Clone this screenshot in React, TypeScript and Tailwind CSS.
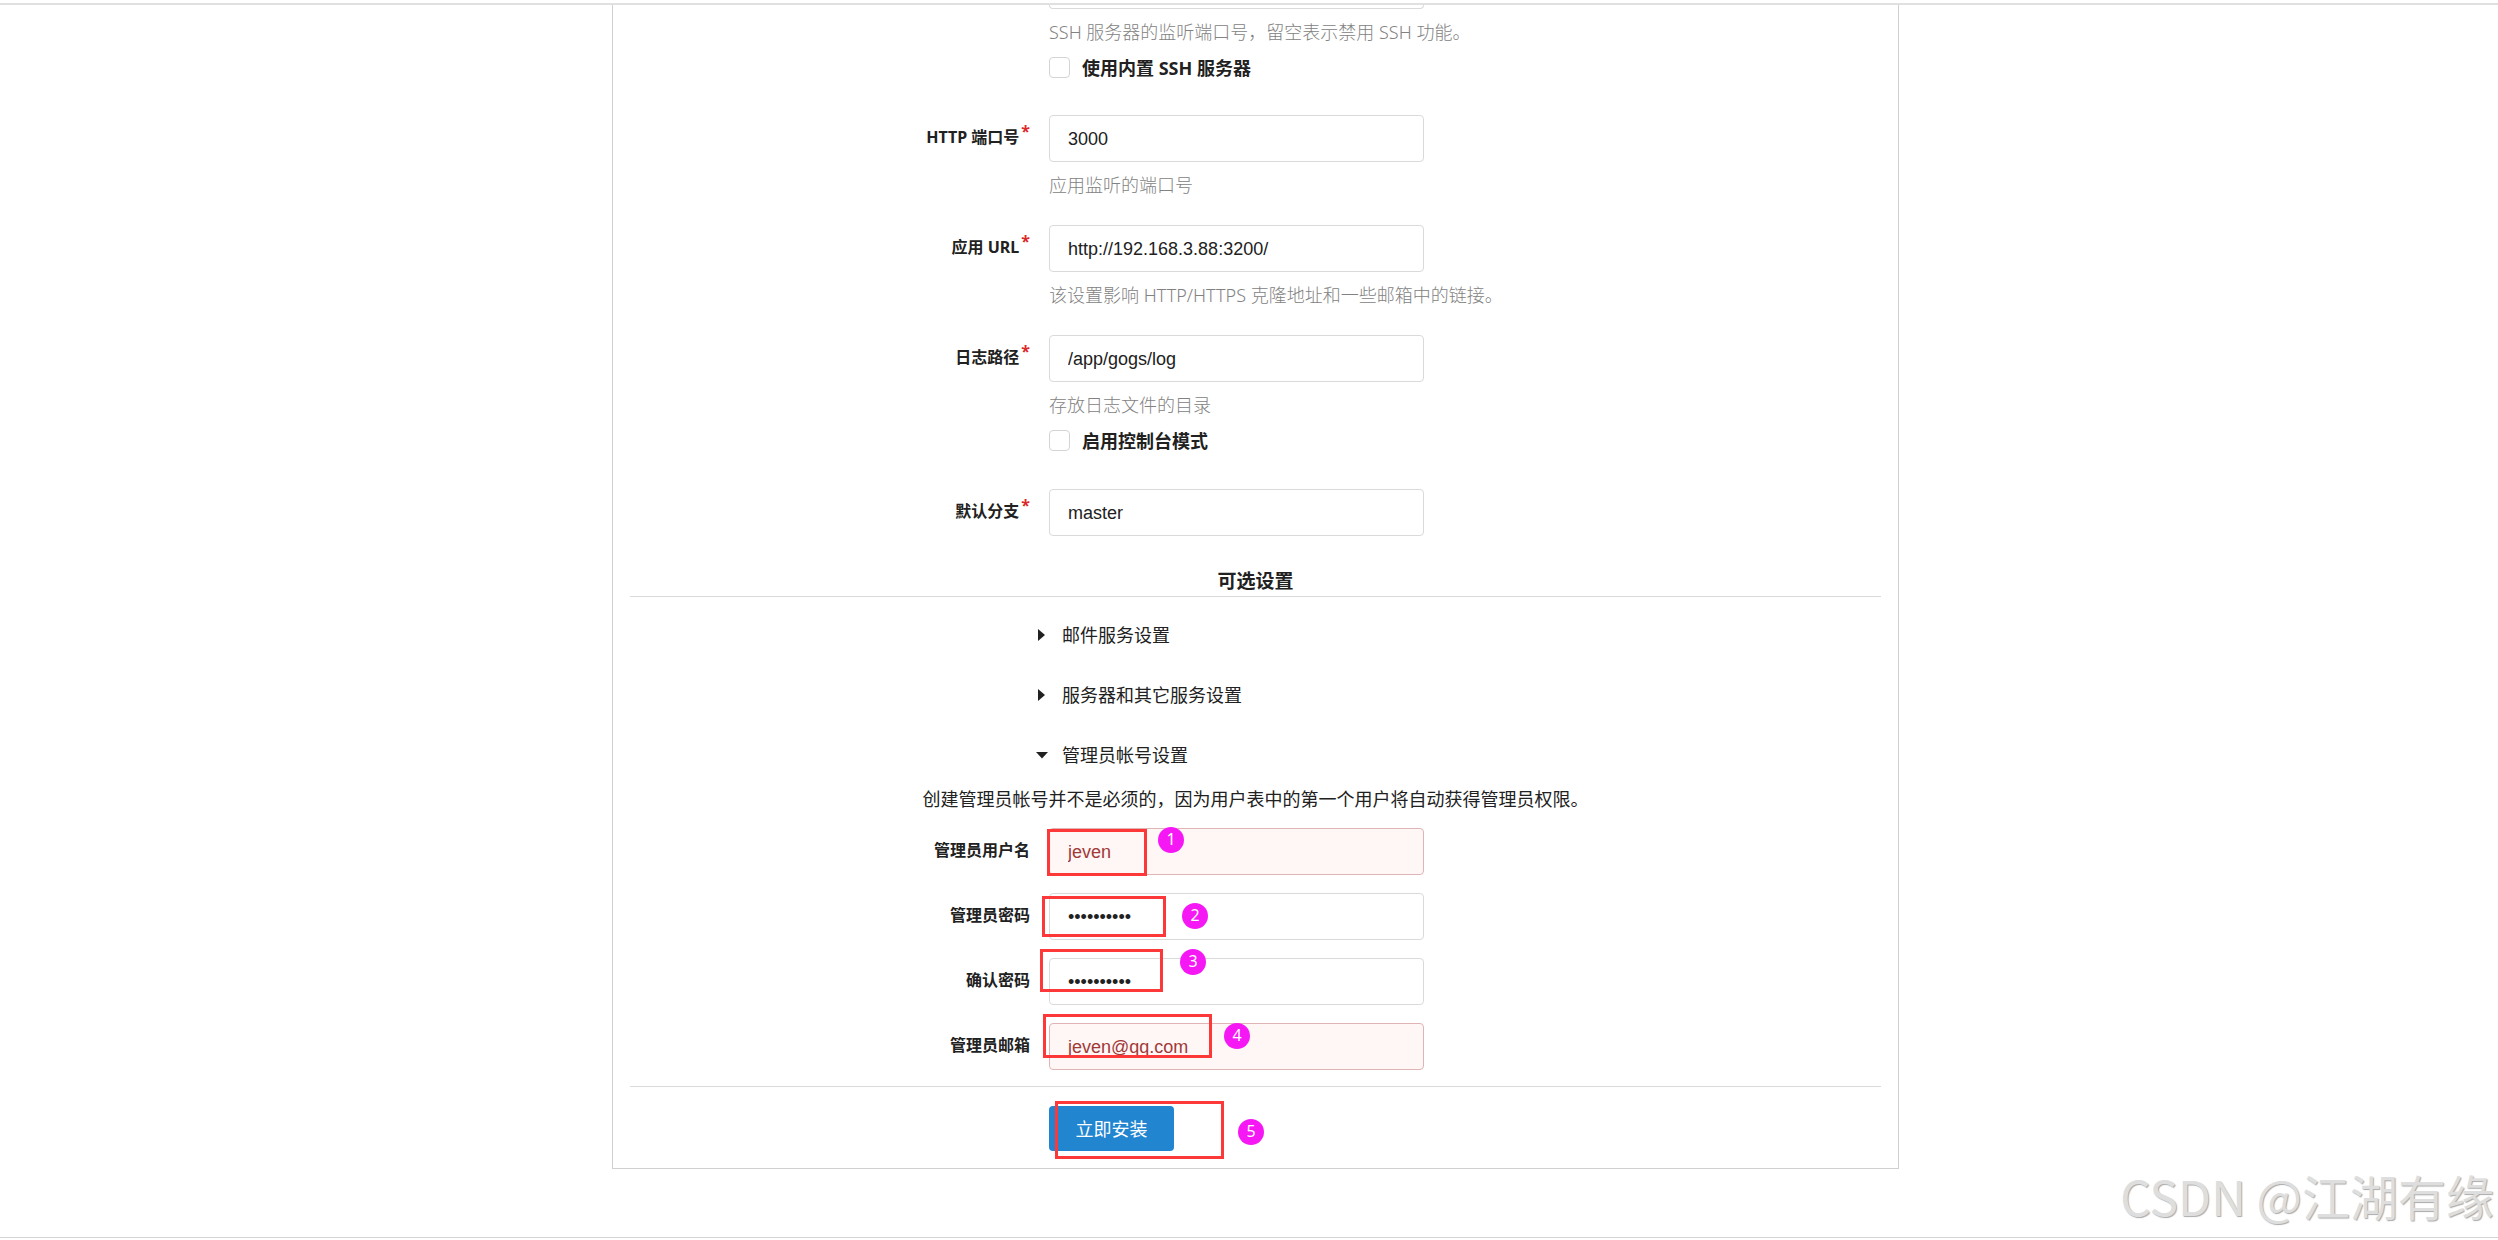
import { useState } from 'react'
import type { InputHTMLAttributes, ReactNode } from 'react'
import clsx from 'clsx'

type FieldProps = InputHTMLAttributes<HTMLInputElement> & {
  id: string
  label: string
  help?: string
  error?: boolean
  children?: ReactNode
}

function HelpText({ children }: { children: ReactNode }) {
  return <p className="mt-[11px] ml-[419px] text-lg/6 font-light whitespace-nowrap text-[#828282]">{children}</p>
}

function Field({ id, label, help, error, required, children, ...rest }: FieldProps) {
  return (
    <div>
      <div className="flex items-center">
        <label htmlFor={id} className="mr-[19px] flex w-[400px] justify-end pb-[3px] text-base/6 font-bold">
          {label}
          {required && <span className="ml-0.5 -mt-1.5 text-[#db2828]">*</span>}
        </label>
        <div className="relative w-[375px]">
          <input
            id={id}
            required={required}
            className={clsx(
              'block h-[47px] w-full rounded border px-[18px] pt-0.5 font-[Liberation_Sans,Arial,sans-serif] text-lg outline-none',
              error ? 'border-[#e0b4b4] bg-[#fff6f6] text-[#9f3a38]' : 'border-[#dadadb] bg-white',
            )}
            {...rest}
          />
          {children}
        </div>
      </div>
      {help && <HelpText>{help}</HelpText>}
    </div>
  )
}

function Checkbox({ id, label }: { id: string; label: string }) {
  return (
    <div className="mt-[13px] ml-[419px] flex h-[21px] items-center gap-3">
      <input id={id} type="checkbox" className="size-[21px] appearance-none rounded border border-[#d4d4d5] bg-white checked:bg-[#2185d0]" />
      <label htmlFor={id} className="text-lg/6 font-bold">{label}</label>
    </div>
  )
}

function Section({ title, open, onToggle }: { title: string; open: boolean; onToggle: () => void }) {
  return (
    <button type="button" aria-expanded={open} onClick={onToggle} className="ml-[406px] flex items-center gap-[14px] text-lg/6">
      <svg viewBox="0 0 12 12" className="size-3" fill="currentColor" aria-hidden="true">
        {open ? <path d="M0 3h12L6 9.500z" /> : <path d="M2 0v12l7-6z" />}
      </svg>
      {title}
    </button>
  )
}

function Mark({ className }: { className: string }) {
  return <span className={clsx('pointer-events-none absolute border-3 border-[#fc3838]', className)} />
}

function Step({ n, className }: { n: number; className: string }) {
  return (
    <span className={clsx('absolute flex size-[26px] items-center justify-center rounded-full bg-[#f518f5] pb-0.5 text-base/6 text-white', className)}>
      {n}
    </span>
  )
}

export default function App() {
  const [open, setOpen] = useState({ mail: false, server: false, admin: true })
  const toggle = (key: keyof typeof open) => setOpen({ ...open, [key]: !open[key] })

  return (
    <div className="relative overflow-hidden bg-white pt-[3px] pb-0.5 font-[Noto_Sans,Noto_Sans_CJK_SC,sans-serif] text-[#212121]">
      <div className="h-0.5 bg-[#e0e0e0]" />
      <main className="border-b border-[#d4d4d5] pb-[68px] pl-[13px]">
        <form
          className="mx-auto max-w-[1287px] border-x border-b border-[#d0d0d1] px-[17px] pb-[17px]"
          onSubmit={(e) => e.preventDefault()}
        >
          {/* tail of the SSH port field, scrolled under the top edge */}
          <div className="ml-[419px] h-1 w-[375px] rounded-b border border-t-0 border-[#dadadb]" />
          <HelpText>SSH 服务器的监听端口号，留空表示禁用 SSH 功能。</HelpText>
          <Checkbox id="start_ssh_server" label="使用内置 SSH 服务器" />

          <div className="mt-[37px] flex flex-col gap-7">
            <Field id="http_port" label="HTTP 端口号" help="应用监听的端口号" defaultValue="3000" required />
            <Field id="app_url" label="应用 URL" help="该设置影响 HTTP/HTTPS 克隆地址和一些邮箱中的链接。" defaultValue="http://192.168.3.88:3200/" required />
            <Field id="log_path" label="日志路径" help="存放日志文件的目录" defaultValue="/app/gogs/log" required />
          </div>
          <Checkbox id="console_mode" label="启用控制台模式" />

          <div className="mt-[38px]">
            <Field id="default_branch" label="默认分支" defaultValue="master" required />
          </div>

          <h4 className="mt-8 border-b border-[#dadadb] pb-0.5 text-center text-[19px]/[26px] font-bold">可选设置</h4>

          <div className="mt-[26px] flex flex-col items-start gap-9">
            <Section title="邮件服务设置" open={open.mail} onToggle={() => toggle('mail')} />
            <Section title="服务器和其它服务设置" open={open.server} onToggle={() => toggle('server')} />
            <Section title="管理员帐号设置" open={open.admin} onToggle={() => toggle('admin')} />
          </div>

          {open.admin && (
            <div className="mt-5">
              <p className="text-center text-lg/6">创建管理员帐号并不是必须的，因为用户表中的第一个用户将自动获得管理员权限。</p>
              <div className="mt-[17px] flex flex-col gap-[18px]">
                <Field id="admin_name" label="管理员用户名" defaultValue="jeven" error>
                  <Mark className="top-px -left-0.5 h-[47px] w-[100px]" />
                  <Step n={1} className="-top-px left-[109px]" />
                </Field>
                <Field id="admin_passwd" label="管理员密码" type="password" defaultValue="gogs123456">
                  <Mark className="top-[3px] -left-[7px] h-[41px] w-[124px]" />
                  <Step n={2} className="top-[10px] left-[133px]" />
                </Field>
                <Field id="admin_confirm_passwd" label="确认密码" type="password" defaultValue="gogs123456">
                  <Mark className="-top-[9px] -left-[9px] h-[43px] w-[123px]" />
                  <Step n={3} className="-top-[9px] left-[131px]" />
                </Field>
                <Field id="admin_email" label="管理员邮箱" type="email" defaultValue="jeven@qq.com" error>
                  <Mark className="-top-[9px] -left-[6px] h-[44px] w-[169px]" />
                  <Step n={4} className="top-0 left-[175px]" />
                </Field>
              </div>
            </div>
          )}

          <div className="mt-4 border-t border-[#dadadb] pt-[19px]">
            <div className="relative ml-[419px] w-[375px]">
              <button type="submit" className="block h-[45px] w-[125px] rounded bg-[#2185d0] text-lg/6 text-white">立即安装</button>
              <Mark className="-top-[5px] left-[6px] h-[58px] w-[169px]" />
              <Step n={5} className="top-[13px] left-[189px]" />
            </div>
          </div>
        </form>
      </main>
      <span className="absolute right-1 bottom-[10px] font-[Noto_Sans_CJK_SC,sans-serif] text-5xl/[70px] text-[#dedede] [text-shadow:1px_1px_1px_#aaa]">
        CSDN @江湖有缘
      </span>
    </div>
  )
}
